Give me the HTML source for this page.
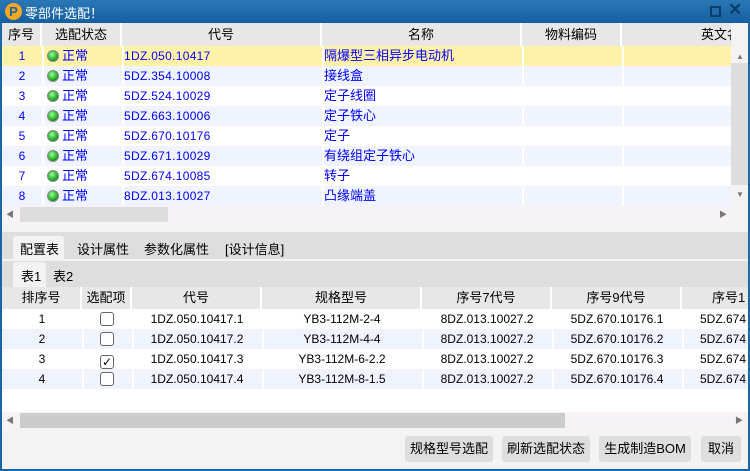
<!DOCTYPE html><html><head><meta charset="utf-8"><style>
*{margin:0;padding:0;box-sizing:border-box}
body{width:750px;height:471px;overflow:hidden;background:#1a66a6;font:12px "Liberation Sans","Noto Sans CJK SC",sans-serif;position:relative}
.a{position:absolute}
.title{left:0;top:0;width:750px;height:23px;background:linear-gradient(#2a78b8,#155f9e);color:#fff;font-size:13px}
.win{left:2px;top:23px;width:746px;height:446px;background:#f3f3f3}
.hd{background:#e7e7e7;color:#000;text-align:center;height:23px;line-height:23px;border-right:2px solid #fff;font-size:13px}
.c{position:absolute;height:20px;line-height:20px;white-space:nowrap;overflow:hidden}
.dot{display:inline-block;width:12px;height:12px;border-radius:50%;background:radial-gradient(circle at 40% 35%,#9f9,#2a2 60%,#161);border:1px solid #888;vertical-align:-2px;margin:0 3px 0 3px}
.btn{position:absolute;top:436px;height:26px;line-height:26px;background:#dedede;border-radius:3px;text-align:center;font-size:13px}
.cb{display:inline-block;width:14px;height:14px;border:1px solid #666;border-radius:3px;background:#fff;vertical-align:-3px;font:bold 12px "DejaVu Sans",sans-serif;line-height:12px;text-align:center}
</style></head><body>
<div class="a title"><div class="a" style="left:5px;top:3px;width:17px;height:17px;border-radius:50%;background:#f5a623;color:#1a66a6;font-weight:bold;font-size:13px;line-height:17px;text-align:center">P</div><div class="a" style="left:25px;top:3px">零部件选配！</div>
<div class="a" style="left:710px;top:6px;width:11px;height:11px;border:2px solid #0d3d66"></div>
<div class="a" style="left:728px;top:0px;font-size:17px;color:#0d3d66;font-weight:bold">✕</div></div>
<div class="a win"></div>
<div class="a" style="left:2px;top:23px;width:729px;height:183px;background:#fff;overflow:hidden" id="g1"></div>
<div class="a" style="left:731px;top:23px;width:17px;height:184px;background:#f3f3f3"><div class="a" style="left:0;top:40px;width:17px;height:122px;background:#ddd"></div><div class="a" style="left:5px;top:29px;color:#777;font-size:8px">▲</div><div class="a" style="left:5px;top:167px;color:#777;font-size:8px">▼</div></div>
<div class="a" style="left:2px;top:206px;width:729px;height:18px;background:#f6f2f6"><div class="a" style="left:18px;top:1px;width:148px;height:15px;background:#ddd"></div><div class="a" style="left:4px;top:3px;color:#777;font-size:8px">◀</div><div class="a" style="left:717px;top:3px;color:#777;font-size:8px">▶</div></div>
<div class="a" style="left:2px;top:232px;width:746px;height:27px;background:#dedede"></div>
<div class="a" style="left:13px;top:236px;width:51px;height:24px;background:#f3f3f3;border-radius:3px 3px 0 0"></div>
<div class="a" style="left:20px;top:239px;font-size:13px">配置表</div><div class="a" style="left:77px;top:239px;font-size:13px">设计属性</div><div class="a" style="left:144px;top:239px;font-size:13px">参数化属性</div><div class="a" style="left:225px;top:239px;font-size:13px">[设计信息]</div>
<div class="a" style="left:2px;top:261px;width:746px;height:26px;background:#dedede"></div>
<div class="a" style="left:13px;top:262px;width:33px;height:25px;background:#f3f3f3;border-radius:3px 3px 0 0"></div>
<div class="a" style="left:21px;top:266px;font-size:13px">表1</div><div class="a" style="left:53px;top:266px;font-size:13px">表2</div>
<div class="a" style="left:2px;top:287px;width:746px;height:125px;background:#fff;overflow:hidden" id="g2"></div>
<div class="a" style="left:2px;top:412px;width:746px;height:17px;background:#f6f2f6"><div class="a" style="left:18px;top:1px;width:545px;height:15px;background:#ccc"></div><div class="a" style="left:4px;top:3px;color:#777;font-size:8px">◀</div><div class="a" style="left:733px;top:3px;color:#777;font-size:8px">▶</div></div>
<div class="btn" style="left:405px;width:88px">规格型号选配</div>
<div class="btn" style="left:502px;width:88px">刷新选配状态</div>
<div class="btn" style="left:599px;width:92px">生成制造BOM</div>
<div class="btn" style="left:701px;width:40px">取消</div>
<script>
var g1=document.getElementById('g1'),h='';
var cols=[[0,40,'序号'],[40,80,'选配状态'],[120,200,'代号'],[320,200,'名称'],[520,100,'物料编码'],[620,120,'英文名']];
cols.forEach(function(c,i){h+='<div class="a hd" style="left:'+c[0]+'px;top:0;width:'+c[1]+'px;'+(i==5?'text-align:right;padding-right:0':'')+'">'+c[2]+'</div>';});
var d=[['1DZ.050.10417','隔爆型三相异步电动机'],['5DZ.354.10008','接线盒'],['5DZ.524.10029','定子线圈'],['5DZ.663.10006','定子铁心'],['5DZ.670.10176','定子'],['5DZ.671.10029','有绕组定子铁心'],['5DZ.674.10085','转子'],['8DZ.013.10027','凸缘端盖']];
d.forEach(function(r,i){var y=23+i*20,bg=i==0?'#fff2a8':(i%2?'#eef3fe':'#fff');
h+='<div class="a" style="left:0;top:'+y+'px;width:729px;height:20px;background:'+bg+'"></div>';
[40,120,320,520,620].forEach(function(x){h+='<div class="a" style="left:'+x+'px;top:'+y+'px;width:2px;height:20px;background:#fff"></div>'});
h+='<div class="c" style="color:#00f;left:0;width:40px;text-align:center;top:'+y+'px">'+(i+1)+'</div>';
h+='<div class="c" style="color:#00f;left:42px;top:'+y+'px;font-size:13px"><span class="dot"></span>正常</div>';
h+='<div class="c" style="color:#00f;left:122px;top:'+y+'px;letter-spacing:0.3px">'+r[0]+'</div>';
h+='<div class="c" style="color:#00f;left:322px;top:'+y+'px;font-size:13px">'+r[1]+'</div>';});
g1.innerHTML=h;
var g2=document.getElementById('g2');h='';
var c2=[[0,80,'排序号'],[80,50,'选配项'],[130,130,'代号'],[260,160,'规格型号'],[420,130,'序号7代号'],[550,130,'序号9代号'],[680,80,'序号1']];
c2.forEach(function(c,i){h+='<div class="a hd" style="left:'+c[0]+'px;top:0;width:'+c[1]+'px;height:22px;line-height:22px;'+(i==6?'text-align:left;padding-left:30px':'')+'">'+c[2]+'</div>';});
for(var i=0;i<4;i++){var y=22+i*20,bg=i%2?'#eef3fe':'#fff',n=i+1;
h+='<div class="a" style="left:0;top:'+y+'px;width:746px;height:20px;background:'+bg+'"></div>';
[80,130,260,420,550,680].forEach(function(x){h+='<div class="a" style="left:'+x+'px;top:'+y+'px;width:2px;height:20px;background:#fff"></div>'});
var sp=['2-4','4-4','6-2.2','8-1.5'][i];
var v=[[0,80,n],[80,50,'<span class="cb">'+(i==2?'✓':'')+'</span>'],[130,130,'1DZ.050.10417.'+n],[260,160,'YB3-112M-'+sp],[420,130,'8DZ.013.10027.2'],[550,130,'5DZ.670.10176.'+n]];
v.forEach(function(c){h+='<div class="c" style="left:'+c[0]+'px;width:'+c[1]+'px;text-align:center;top:'+y+'px">'+c[2]+'</div>'});
h+='<div class="c" style="left:698px;top:'+y+'px">5DZ.674</div>';}
g2.innerHTML=h;
</script>
</body></html>
